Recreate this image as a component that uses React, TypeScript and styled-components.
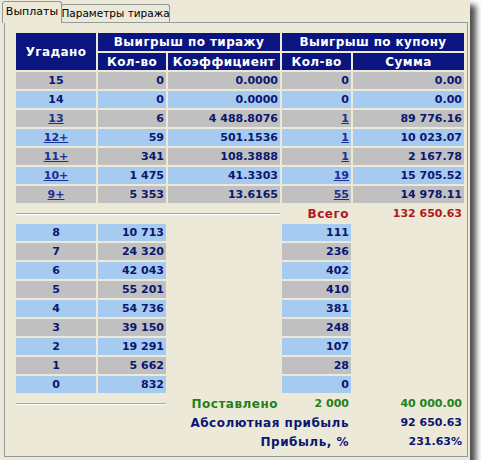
import React from "react";
import styled, { createGlobalStyle, css } from "styled-components";

const Global = createGlobalStyle`
  html, body { margin: 0; padding: 0; background: #ffffff; }
  body { font-family: "DejaVu Sans", Verdana, sans-serif; }
`;

const Window = styled.div`
  width: 470px;
  height: 460px;
  box-sizing: border-box;
  background: #ece9d8;
  padding: 0 0 0 2px;
  display: flex;
  flex-direction: column;
  box-shadow: 5px 6px 6px 1px rgba(0, 0, 0, 0.7);
`;

const TabStrip = styled.div`
  height: 22px;
  display: flex;
  align-items: flex-end;
`;

const Tab = styled.div<{ $active?: boolean }>`
  box-sizing: border-box;
  border: 1px solid #919b9c;
  border-bottom: none;
  border-radius: 3px 3px 0 0;
  font-family: "DejaVu Sans", Tahoma, sans-serif;
  font-size: 11px;
  white-space: nowrap;
  color: #000;
  display: flex;
  align-items: center;
  justify-content: center;
  background: #ece9d8;
  ${(p) =>
    p.$active
      ? css`
          height: 22px;
          width: 60px;
          margin-bottom: -1px;
          position: relative;
          z-index: 1;
          padding-bottom: 2px;
        `
      : css`
          height: 18px;
          width: 109px;
          margin-left: -1px;
          padding-bottom: 1px;
          font-size: 10.5px;
        `}
`;

const Panel = styled.div`
  margin-left: 2px;
  width: 464px;
  height: 435px;
  box-sizing: border-box;
  border: 1px solid #919b9c;
  background: #ece9d8;
  padding: 10px 0 0 11px;
`;

const Grid = styled.div`
  display: grid;
  grid-template-columns: 80px 68px 112px 69px 111px;
  grid-template-rows: 18px 17px;
  grid-auto-rows: 17px;
  gap: 2px;
  font-family: "DejaVu Sans", Verdana, sans-serif;
  font-weight: bold;
  font-size: 11px;
`;

const Head = styled.div<{ $span?: number; $rows?: number }>`
  background: #0a1580;
  color: #fff;
  font-size: 12px;
  letter-spacing: 0.4px;
  display: flex;
  align-items: center;
  justify-content: center;
  ${(p) => p.$span && css`grid-column: span ${p.$span};`}
  ${(p) => p.$rows && css`grid-row: span ${p.$rows};`}
`;

type Tone = "gray" | "blue" | "none";
const toneBg: Record<Tone, string> = {
  gray: "#c0c0c0",
  blue: "#a6caf0",
  none: "transparent",
};

const Cell = styled.div<{
  $tone?: Tone;
  $center?: boolean;
  $color?: string;
  $span?: number;
  $start?: number;
  $label?: boolean;
}>`
  background: ${(p) => toneBg[p.$tone ?? "none"]};
  color: ${(p) => p.$color ?? "#0b1670"};
  display: flex;
  align-items: center;
  justify-content: ${(p) => (p.$center ? "center" : "flex-end")};
  padding: 0 ${(p) => (p.$center ? 0 : 2)}px 0 0;
  white-space: nowrap;
  ${(p) =>
    p.$label &&
    css`
      font-size: 12px;
      letter-spacing: 0.5px;
    `}
  ${(p) => p.$span && css`grid-column: ${p.$start ? `${p.$start} / ` : ""}span ${p.$span};`}
  ${(p) => !p.$span && p.$start && css`grid-column: ${p.$start};`}
`;

const Link = styled.span`
  color: #1c2f96;
  text-decoration: underline;
`;

const Rule = styled.div<{ $span: number }>`
  grid-column: 1 / span ${(p) => p.$span};
  display: flex;
  align-items: center;
  &::before {
    content: "";
    flex: 1;
    height: 0;
    border-top: 1px solid #a7a69a;
    border-bottom: 1px solid #ffffff;
  }
`;

const top = [
  { g: "15", gl: false, k: "0", c: "0.0000", kk: "0", kl: false, s: "0.00" },
  { g: "14", gl: false, k: "0", c: "0.0000", kk: "0", kl: false, s: "0.00" },
  { g: "13", gl: true, k: "6", c: "4 488.8076", kk: "1", kl: true, s: "89 776.16" },
  { g: "12+", gl: true, k: "59", c: "501.1536", kk: "1", kl: true, s: "10 023.07" },
  { g: "11+", gl: true, k: "341", c: "108.3888", kk: "1", kl: true, s: "2 167.78" },
  { g: "10+", gl: true, k: "1 475", c: "41.3303", kk: "19", kl: true, s: "15 705.52" },
  { g: "9+", gl: true, k: "5 353", c: "13.6165", kk: "55", kl: true, s: "14 978.11" },
];

const low = [
  ["8", "10 713", "111"],
  ["7", "24 320", "236"],
  ["6", "42 043", "402"],
  ["5", "55 201", "410"],
  ["4", "54 736", "381"],
  ["3", "39 150", "248"],
  ["2", "19 291", "107"],
  ["1", "5 662", "28"],
  ["0", "832", "0"],
];

const RED = "#b0181c";
const GREEN = "#24801c";

export default function App() {
  return (
    <>
      <Global />
      <Window>
        <TabStrip>
          <Tab $active>Выплаты</Tab>
          <Tab>Параметры тиража</Tab>
        </TabStrip>
        <Panel>
          <Grid>
            <Head $rows={2}>Угадано</Head>
            <Head $span={2}>Выигрыш по тиражу</Head>
            <Head $span={2}>Выигрыш по купону</Head>
            <Head>Кол-во</Head>
            <Head>Коэффициент</Head>
            <Head>Кол-во</Head>
            <Head>Сумма</Head>

            {top.map((r, i) => {
              const t: Tone = i % 2 === 0 ? "gray" : "blue";
              return (
                <React.Fragment key={r.g}>
                  <Cell $tone={t} $center>
                    {r.gl ? <Link>{r.g}</Link> : r.g}
                  </Cell>
                  <Cell $tone={t}>{r.k}</Cell>
                  <Cell $tone={t}>{r.c}</Cell>
                  <Cell $tone={t}>{r.kl ? <Link>{r.kk}</Link> : r.kk}</Cell>
                  <Cell $tone={t}>{r.s}</Cell>
                </React.Fragment>
              );
            })}

            <Rule $span={3} />
            <Cell $color={RED} $label>
              Всего
            </Cell>
            <Cell $color={RED}>132 650.63</Cell>

            {low.map((r, i) => {
              const t: Tone = i % 2 === 0 ? "blue" : "gray";
              return (
                <React.Fragment key={r[0]}>
                  <Cell $tone={t} $center>
                    {r[0]}
                  </Cell>
                  <Cell $tone={t}>{r[1]}</Cell>
                  <Cell $tone={t} $start={4}>
                    {r[2]}
                  </Cell>
                  <Cell />
                </React.Fragment>
              );
            })}

            <Rule $span={2} />
            <Cell $color={GREEN} $label>
              Поставлено
            </Cell>
            <Cell $color={GREEN}>2 000</Cell>
            <Cell $color={GREEN}>40 000.00</Cell>

            <Cell $start={3} $span={2} $label>
              Абсолютная прибыль
            </Cell>
            <Cell>92 650.63</Cell>
            <Cell $start={3} $span={2} $label>
              Прибыль, %
            </Cell>
            <Cell>231.63%</Cell>
          </Grid>
        </Panel>
      </Window>
    </>
  );
}
